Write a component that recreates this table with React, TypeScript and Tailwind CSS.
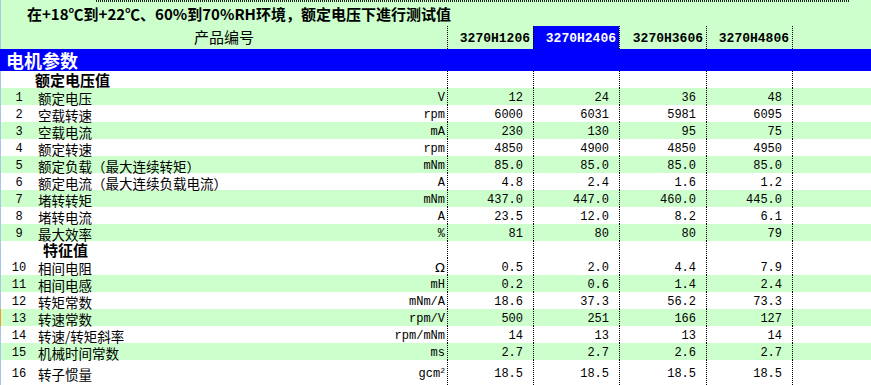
import React from "react";

type Row = {
  no: number;
  label: string;
  unit: React.ReactNode;
  values: string[];
};

const models = ["3270H1206", "3270H2406", "3270H3606", "3270H4806"];
const colW = ["w-[86px]", "w-[86px]", "w-[87px]", "w-[86px]"];

const cjk = "font-['Noto_Sans_CJK_SC',sans-serif]";
const mono = "font-['Liberation_Mono','Noto_Sans_CJK_SC',monospace]";
const sep = "border-l border-dotted border-black";

const ratedRows: Row[] = [
  { no: 1, label: "额定电压", unit: "V", values: ["12", "24", "36", "48"] },
  { no: 2, label: "空载转速", unit: "rpm", values: ["6000", "6031", "5981", "6095"] },
  { no: 3, label: "空载电流", unit: "mA", values: ["230", "130", "95", "75"] },
  { no: 4, label: "额定转速", unit: "rpm", values: ["4850", "4900", "4850", "4950"] },
  { no: 5, label: "额定负载（最大连续转矩）", unit: "mNm", values: ["85.0", "85.0", "85.0", "85.0"] },
  { no: 6, label: "额定电流（最大连续负载电流）", unit: "A", values: ["4.8", "2.4", "1.6", "1.2"] },
  { no: 7, label: "堵转转矩", unit: "mNm", values: ["437.0", "447.0", "460.0", "445.0"] },
  { no: 8, label: "堵转电流", unit: "A", values: ["23.5", "12.0", "8.2", "6.1"] },
  { no: 9, label: "最大效率", unit: "%", values: ["81", "80", "80", "79"] },
];

const charRows: Row[] = [
  {
    no: 10,
    label: "相间电阻",
    unit: <span className="font-['DejaVu_Sans',sans-serif] text-[13px] leading-[14px]">Ω</span>,
    values: ["0.5", "2.0", "4.4", "7.9"],
  },
  { no: 11, label: "相间电感", unit: "mH", values: ["0.2", "0.6", "1.4", "2.4"] },
  { no: 12, label: "转矩常数", unit: "mNm/A", values: ["18.6", "37.3", "56.2", "73.3"] },
  { no: 13, label: "转速常数", unit: "rpm/V", values: ["500", "251", "166", "127"] },
  { no: 14, label: "转速/转矩斜率", unit: "rpm/mNm", values: ["14", "13", "13", "14"] },
  { no: 15, label: "机械时间常数", unit: "ms", values: ["2.7", "2.7", "2.6", "2.7"] },
  {
    no: 16,
    label: "转子惯量",
    unit: (
      <span>
        gcm<sup className="relative -top-[4px] text-[8px]">2</sup>
      </span>
    ),
    values: ["18.5", "18.5", "18.5", "18.5"],
  },
];

const DataRow = ({ row }: { row: Row }) => {
  const green = row.no % 2 === 1;
  const tall = row.no === 16;
  return (
    <div className={`flex ${tall ? "h-[25px]" : "h-[17px]"} ${green ? "bg-[#ccffcc]" : "bg-white"}`}>
      <div
        className={`flex w-[447px] items-center pt-[2px] border-l ${
          row.no === 13 ? "border-l-[#f39a2c]" : "border-l-[#a9c4e4]"
        }`}
      >
        <span className={`w-[36px] text-center text-[12px] leading-[14px] ${mono}`}>{row.no}</span>
        <span className={`ml-[1px] text-[13.5px] leading-[14px] ${cjk}`}>{row.label}</span>
        <span className={`ml-auto flex h-[14px] items-center pr-[2px] text-[12px] leading-[14px] ${mono}`}>
          {row.unit}
        </span>
      </div>
      {row.values.map((v, i) => (
        <div
          key={i}
          className={`${colW[i]} ${sep} flex items-center justify-end pt-[2px] pr-[10px] text-[12px] leading-[14px] ${mono}`}
        >
          {v}
        </div>
      ))}
      <div className={`flex-1 ${sep}`} />
    </div>
  );
};

const SectionRow = ({ title, indent }: { title: string; indent: string }) => (
  <div className="flex h-[17px] bg-white">
    <div className={`flex w-[447px] items-center border-l border-l-[#a9c4e4] ${indent}`}>
      <span className={`text-[15px] font-bold leading-[15px] ${cjk}`}>{title}</span>
    </div>
    {colW.map((w, i) => (
      <div key={i} className={`${w} ${sep}`} />
    ))}
    <div className={`flex-1 ${sep}`} />
  </div>
);

export default function App() {
  return (
    <div className="h-[385px] w-[871px] overflow-hidden bg-[#ccffcc] text-black">
      {/* test conditions */}
      <div className="h-[26px] border-l border-l-[#a9c4e4]">
        <div className="ml-[95px] h-[2px] w-[754px] bg-[repeating-linear-gradient(90deg,#222_0px,#222_1px,transparent_1px,transparent_2px)]" />
        <div className={`pl-[26px] pt-[4px] text-[15px] font-bold leading-none ${cjk}`}>
          在+18℃到+22℃、60%到70%RH环境，额定电压下進行测试值
        </div>
      </div>

      {/* model header */}
      <div className="flex h-[23px]">
        <div className={`flex w-[447px] items-center justify-center border-l border-l-[#a9c4e4] text-[15px] ${cjk}`}>
          产品编号
        </div>
        {models.map((m, i) => (
          <div
            key={m}
            className={`${colW[i]} ${sep} flex items-center justify-end pt-[2px] pr-[3px] text-[13px] font-bold ${mono} ${
              i === 1 ? "bg-[#0000ff] text-white" : ""
            }`}
          >
            {m}
          </div>
        ))}
        <div className={`flex-1 ${sep}`} />
      </div>

      <div className="flex h-[22px] items-center bg-[#0000ff] pl-[6px]">
        <span className={`text-[18px] font-bold leading-none text-white ${cjk}`}>电机参数</span>
      </div>

      <SectionRow title="额定电压值" indent="pl-[34px]" />
      {ratedRows.map((r) => (
        <DataRow key={r.no} row={r} />
      ))}

      <SectionRow title="特征值" indent="pl-[42px]" />
      {charRows.map((r) => (
        <DataRow key={r.no} row={r} />
      ))}
    </div>
  );
}
